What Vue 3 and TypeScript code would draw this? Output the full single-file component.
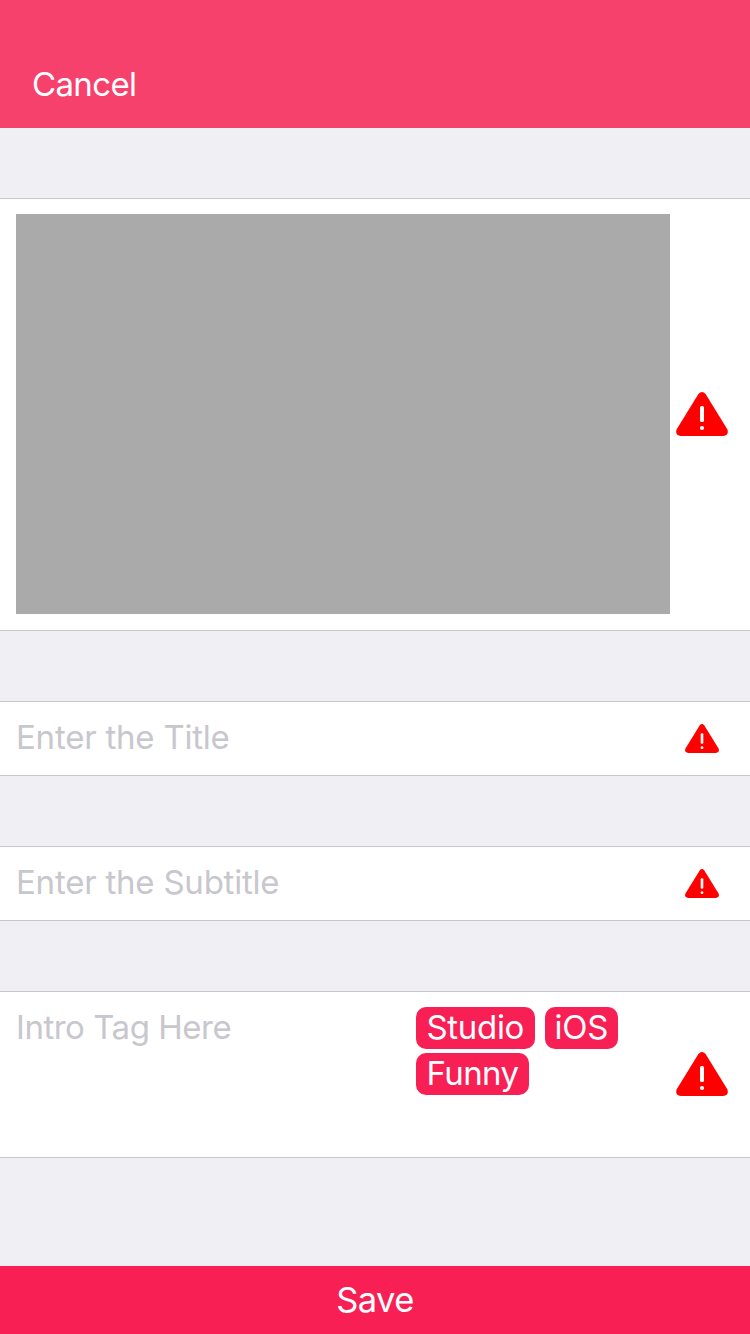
<script setup lang="ts">
interface Tag {
  label: string
  kind: string
}

const tags: Tag[] = [
  { label: 'Studio', kind: 'studio' },
  { label: 'iOS', kind: 'ios' },
  { label: 'Funny', kind: 'funny' },
]

const fields = [
  { placeholder: 'Enter the Title', kind: 'title' },
  { placeholder: 'Enter the Subtitle', kind: 'subtitle' },
]
</script>

<template>
  <div class="screen">
    <header class="navbar"><span class="cancel">Cancel</span></header>

    <main class="form">
      <section class="row photo-row">
        <div class="photo"></div>
        <svg class="warning" viewBox="0 0 52 44">
          <path class="triangle" d="M22.4 2Q26-2 29.6 2L51.3 37.2Q53.4 43.2 47.2 44H4.8Q-1.4 43.2.7 37.2Z" />
          <rect class="mark" x="24" y="14" width="4" height="16" rx="1.6" />
          <circle class="mark" cx="26" cy="36" r="2.1" />
        </svg>
      </section>

      <section v-for="field in fields" :key="field.kind" class="row field-row">
        <span class="placeholder" :class="field.kind">{{ field.placeholder }}</span>
        <svg class="warning small" viewBox="0 0 52 44">
          <path class="triangle" d="M22.4 2Q26-2 29.6 2L51.3 37.2Q53.4 43.2 47.2 44H4.8Q-1.4 43.2.7 37.2Z" />
          <rect class="mark" x="24" y="14" width="4" height="16" rx="1.6" />
          <circle class="mark" cx="26" cy="36" r="2.1" />
        </svg>
      </section>

      <section class="row tag-row">
        <span class="placeholder intro">Intro Tag Here</span>
        <div class="tags">
          <span v-for="tag in tags" :key="tag.kind" class="tag" :class="tag.kind">{{ tag.label }}</span>
        </div>
        <svg class="warning" viewBox="0 0 52 44">
          <path class="triangle" d="M22.4 2Q26-2 29.6 2L51.3 37.2Q53.4 43.2 47.2 44H4.8Q-1.4 43.2.7 37.2Z" />
          <rect class="mark" x="24" y="14" width="4" height="16" rx="1.6" />
          <circle class="mark" cx="26" cy="36" r="2.1" />
        </svg>
      </section>
    </main>

    <footer class="save"><span>Save</span></footer>
  </div>
</template>

<style scoped>
.screen {
  width: 750px;
  height: 1334px;
  display: flex;
  flex-direction: column;
  overflow: hidden;
  background: #efeff4;
  font-family: Inter, "Liberation Sans", sans-serif;
  font-size: 33px;
  line-height: 40px;
  white-space: nowrap;
}
.screen * {
  box-sizing: border-box;
}
.navbar {
  flex: none;
  height: 128px;
  padding: 64px 0 0 32px;
  background: #f7416d;
  color: #fff;
}
.cancel {
  letter-spacing: -0.65px;
}
.form {
  flex: 1;
  display: flex;
  flex-direction: column;
  gap: 70px;
  padding-top: 70px;
}
.row {
  display: flex;
  align-items: center;
  background: #fff;
  border-top: 1px solid #c8c7cc;
  border-bottom: 1px solid #c8c7cc;
  padding: 0 22px 0 16px;
}
.photo-row {
  height: 433px;
  justify-content: space-between;
}
.photo {
  width: 654px;
  height: 400px;
  background: #aaa;
  margin-top: -1px;
}
.photo-row .warning {
  margin-top: -1px;
}
.warning {
  flex: none;
  display: block;
  width: 52px;
  height: 44px;
}
.small {
  width: 34px;
  height: 29px;
  margin-top: -1px;
}
.triangle {
  fill: #f00;
}
.mark {
  fill: #fff;
}
.field-row {
  height: 75px;
  justify-content: space-between;
  padding-right: 31px;
}
.placeholder {
  color: #c7c7cd;
  letter-spacing: -0.22px;
}
.field-row .placeholder {
  padding-bottom: 3px;
}
.tag-row {
  height: 167px;
  align-items: flex-start;
  padding-top: 15px;
}
.intro {
  width: 400px;
  letter-spacing: -0.48px;
}
.tags {
  width: 260px;
  display: flex;
  flex-wrap: wrap;
  gap: 4px 10px;
}
.tag {
  height: 42px;
  border-radius: 10px;
  background: #f81f55;
  color: #fff;
  text-align: center;
  letter-spacing: -0.3px;
}
.studio {
  width: 118.5px;
}
.ios {
  width: 73.5px;
}
.funny {
  width: 113px;
  letter-spacing: -0.6px;
}
.tag-row .warning {
  margin-top: 45px;
}
.save {
  flex: none;
  height: 68px;
  display: flex;
  align-items: center;
  justify-content: center;
  background: #f81f55;
  color: #fff;
  font-size: 34.5px;
  letter-spacing: -0.6px;
}
</style>

<style>
body {
  margin: 0;
}
</style>
